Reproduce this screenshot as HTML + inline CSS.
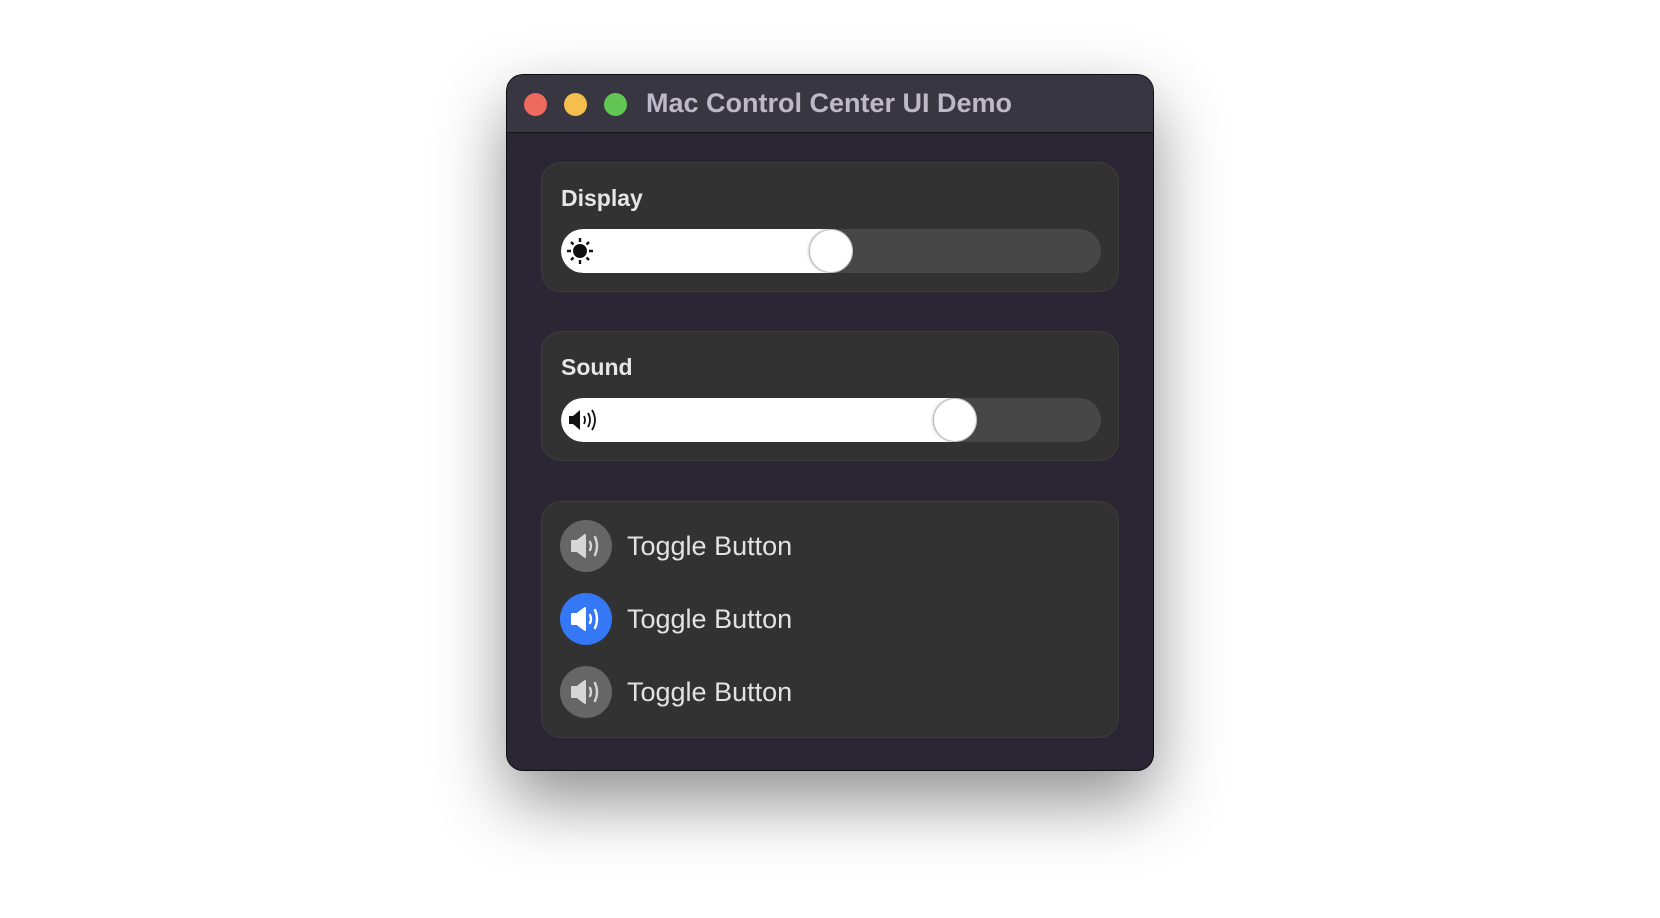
<!DOCTYPE html>
<html><head><meta charset="utf-8"><style>
html,body{margin:0;padding:0;width:1660px;height:918px;background:#fff;overflow:hidden;font-family:"Liberation Sans",sans-serif}
.win{position:absolute;left:507px;top:75px;width:646px;height:695px;border-radius:16px;background:#2a2634;box-shadow:0 30px 70px rgba(0,0,0,.45),0 0 0 1px #111;overflow:hidden}
.tb{position:absolute;left:0;top:0;width:100%;height:57px;background:#383641;border-bottom:1px solid #151419}
.dot{position:absolute;top:18px;width:23px;height:23px;border-radius:50%}
.title{position:absolute;left:139px;top:13px;font-size:27px;font-weight:bold;color:#bdb9c8;white-space:nowrap}
.card{position:absolute;left:34px;width:576px;background:#323232;border:1px solid #3d3d3f;border-radius:20px}
.lbl{position:absolute;left:19px;font-size:23px;font-weight:bold;color:#e6e6e6}
.track{position:absolute;left:19px;width:540px;height:44px;border-radius:22px;background:#474747;overflow:hidden}
.fill{position:absolute;left:0;top:0;height:44px;background:#fff;border-radius:22px}
.knob{position:absolute;top:0;width:44px;height:44px;border-radius:50%;background:#fff;border:1px solid #bbb;box-sizing:border-box;box-shadow:-1px 0 2px rgba(0,0,0,.2)}
.row{position:absolute;left:18px;height:52px}
.circ{position:absolute;left:0;top:0;width:52px;height:52px;border-radius:50%;background:#666}
.txt{position:absolute;left:67px;top:11px;font-size:27px;color:#e2e2e2;white-space:nowrap}
</style></head><body>
<div class="win">
 <div class="tb">
  <div class="dot" style="left:17px;background:#ec6a5e"></div>
  <div class="dot" style="left:57px;background:#f4bf4f"></div>
  <div class="dot" style="left:97px;background:#61c554"></div>
  <div class="title">Mac Control Center UI Demo</div>
 </div>
 <div class="card" style="top:87px;height:128px">
  <div class="lbl" style="top:22px">Display</div>
  <div class="track" style="top:66px">
   <div class="fill" style="width:292px"></div>
   <div class="knob" style="left:248px"></div>
   <svg style="position:absolute;left:5px;top:8px" width="28" height="28" viewBox="0 0 28 28"><circle cx="14" cy="14" r="7" fill="#111"/><g stroke="#111" stroke-width="2.4" stroke-linecap="butt"><line x1="14" y1="1" x2="14" y2="5"/><line x1="14" y1="23" x2="14" y2="27"/><line x1="1" y1="14" x2="5" y2="14"/><line x1="23" y1="14" x2="27" y2="14"/><line x1="5" y1="5" x2="7.5" y2="7.5"/><line x1="20.5" y1="20.5" x2="23" y2="23"/><line x1="23" y1="5" x2="20.5" y2="7.5"/><line x1="5" y1="23" x2="7.5" y2="20.5"/></g></svg>
  </div>
 </div>
 <div class="card" style="top:256px;height:128px">
  <div class="lbl" style="top:22px">Sound</div>
  <div class="track" style="top:66px">
   <div class="fill" style="width:416px"></div>
   <div class="knob" style="left:372px"></div>
   <svg style="position:absolute;left:7px;top:10px" width="30" height="24" viewBox="0 0 30 24"><path d="M1 8h4l7-6v20l-7-6H1z" fill="#111"/><path d="M16 8q2 4 0 8M20 5q4 7 0 14M24 2q6 10 0 20" stroke="#111" stroke-width="1.8" fill="none"/></svg>
  </div>
 </div>
 <div class="card" style="top:426px;height:235px">
  <div class="row" style="top:18px"><div class="circ"></div><svg style="position:absolute;left:9px;top:12px" width="36" height="28" viewBox="0 0 36 28"><path d="M3 9h5l8-6v22l-8-6H3z" fill="#d6d6d6" stroke="#d6d6d6" stroke-width="2" stroke-linejoin="round"/><path d="M21 10q2 4 0 8M26 5q4 9 0 18" stroke="#d6d6d6" stroke-width="2.4" fill="none" stroke-linecap="round"/></svg><div class="txt">Toggle Button</div></div>
  <div class="row" style="top:91px"><div class="circ" style="background:#3478f6"></div><svg style="position:absolute;left:9px;top:12px" width="36" height="28" viewBox="0 0 36 28"><path d="M3 9h5l8-6v22l-8-6H3z" fill="#fff" stroke="#fff" stroke-width="2" stroke-linejoin="round"/><path d="M21 10q2 4 0 8M26 5q4 9 0 18" stroke="#fff" stroke-width="2.4" fill="none" stroke-linecap="round"/></svg><div class="txt">Toggle Button</div></div>
  <div class="row" style="top:164px"><div class="circ"></div><svg style="position:absolute;left:9px;top:12px" width="36" height="28" viewBox="0 0 36 28"><path d="M3 9h5l8-6v22l-8-6H3z" fill="#d6d6d6" stroke="#d6d6d6" stroke-width="2" stroke-linejoin="round"/><path d="M21 10q2 4 0 8M26 5q4 9 0 18" stroke="#d6d6d6" stroke-width="2.4" fill="none" stroke-linecap="round"/></svg><div class="txt">Toggle Button</div></div>
 </div>
</div>
</body></html>
